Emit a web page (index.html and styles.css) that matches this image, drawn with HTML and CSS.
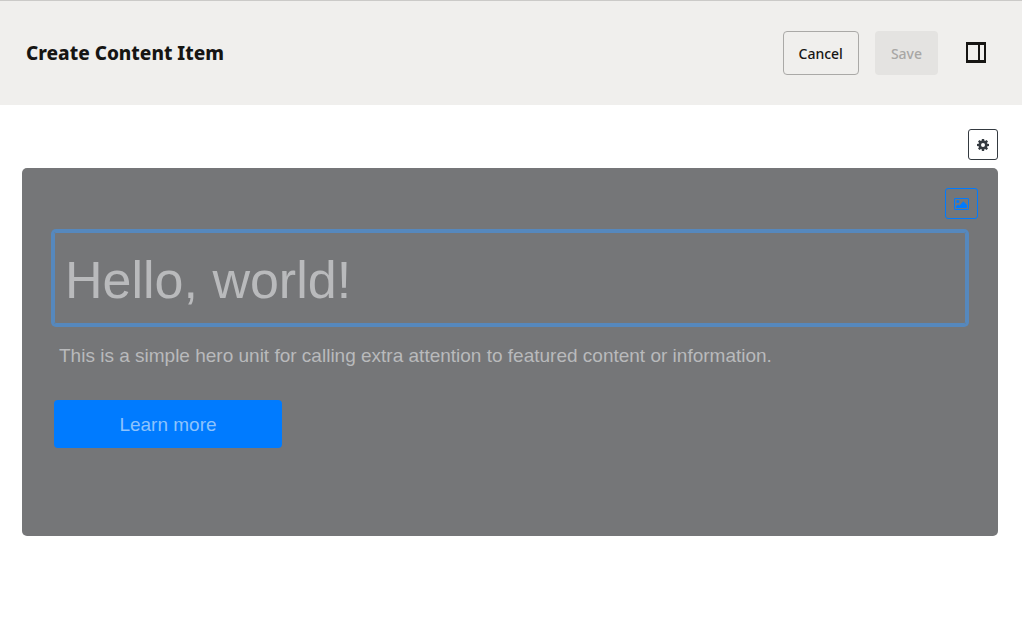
FILE: index.html
```html
<!DOCTYPE html>
<html lang="en">
<head>
<meta charset="utf-8">
<meta name="viewport" content="width=device-width, initial-scale=1">
<title>Create Content Item</title>
<link rel="stylesheet" href="styles.css">
</head>
<body>
<header class="topbar">
  <h1 class="topbar-title">Create Content Item</h1>
  <div class="actions">
    <button type="button" class="btn btn-outline">Cancel</button>
    <button type="button" class="btn btn-save" disabled>Save</button>
    <button type="button" class="btn-panel" aria-label="Toggle side panel">
      <svg width="20" height="21" viewBox="0 0 20 21" aria-hidden="true"><path fill="#161513" fill-rule="evenodd" d="M0 0h20v21H0zM2 3v15h10V3zM14 3v15h4V3z"/></svg>
    </button>
  </div>
</header>
<main class="content">
  <div class="tools">
    <button type="button" class="icon-btn icon-btn-dark" aria-label="Settings">
      <svg width="12" height="12" viewBox="0 0 12 12" aria-hidden="true"><g fill="currentColor"><path id="tooth" d="M4.900 0h2.200l.4 2.500h-3z"/><use href="#tooth" transform="rotate(45 6 6)"/><use href="#tooth" transform="rotate(90 6 6)"/><use href="#tooth" transform="rotate(135 6 6)"/><use href="#tooth" transform="rotate(180 6 6)"/><use href="#tooth" transform="rotate(225 6 6)"/><use href="#tooth" transform="rotate(270 6 6)"/><use href="#tooth" transform="rotate(315 6 6)"/></g><circle cx="6" cy="6" r="3.200" fill="none" stroke="currentColor" stroke-width="2.400"/></svg>
    </button>
  </div>
  <section class="hero" aria-label="Hero">
    <div class="hero-tools">
      <button type="button" class="icon-btn icon-btn-blue" aria-label="Choose image">
        <svg width="15" height="12" viewBox="0 0 15 12" aria-hidden="true"><rect x=".5" y=".5" width="14" height="11" rx=".6" fill="none" stroke="currentColor"/><circle cx="3.800" cy="3.500" r="1.500" fill="currentColor"/><path fill="currentColor" d="M2 10V8.300L4 6.500l1.500 1.200L9.300 3.300 13 7v3z"/></svg>
      </button>
    </div>
    <input class="field field-title" type="text" aria-label="Title" placeholder="Hello, world!">
    <input class="field field-text" type="text" aria-label="Description" placeholder="This is a simple hero unit for calling extra attention to featured content or information.">
    <button type="button" class="cta">Learn more</button>
  </section>
</main>
</body>
</html>
```
FILE: styles.css
```css
* {
  box-sizing: border-box;
}

body {
  margin: 0;
  background: #fff;
  font-family: "Liberation Sans", Arial, sans-serif;
}

button,
input {
  font-family: inherit;
  margin: 0;
}

.topbar {
  display: flex;
  align-items: center;
  justify-content: space-between;
  min-height: 105px;
  padding: 0 24px 0 26px;
  background: #f0efed;
  border-top: 1px solid #cbcac8;
}

.topbar-title {
  margin: 0;
  font: 800 19px/28px "Noto Sans", sans-serif;
  color: #161513;
}

.actions {
  display: flex;
  align-items: center;
  gap: 16px;
}

.btn {
  height: 44px;
  padding: 2px 15px 0;
  border: 1px solid transparent;
  border-radius: 4px;
  font: 500 14px/20px "Noto Sans", sans-serif;
}

.btn-outline {
  border-color: #aaa9a7;
  background: transparent;
  color: #161513;
}

.btn-save {
  background: #e4e3e1;
  color: #a8a7a5;
}

.btn-panel {
  display: flex;
  align-items: center;
  justify-content: center;
  width: 44px;
  height: 44px;
  padding: 0 0 2px;
  border: 0;
  background: transparent;
}

.content {
  padding: 24px 24px 24px 22px;
}

.tools,
.hero-tools {
  display: flex;
  justify-content: flex-end;
}

.tools {
  margin-bottom: 8px;
}

.icon-btn {
  display: flex;
  align-items: center;
  justify-content: center;
  height: 31px;
  padding: 0;
  border: 1px solid currentColor;
  border-radius: 3px;
  background: transparent;
}

.icon-btn-dark {
  width: 30px;
  color: #343a40;
}

.icon-btn-blue {
  width: 33px;
  color: #007bff;
}

.hero {
  padding: 20px 32px 88px;
  border-radius: 5px;
  background: #757678;
}

.hero-tools {
  margin-right: -12px;
  margin-bottom: 13px;
}

.field {
  display: block;
  width: 100%;
  border: 0;
  outline: 0;
  background: transparent;
  color: #b9babc;
}

.field::placeholder {
  color: #b9babc;
  opacity: 1;
}

.field-title {
  height: 92px;
  padding: 4px 10px 0;
  border: 1px solid #5688bd;
  border-radius: 2px;
  box-shadow: 0 0 0 3px #5688bd;
  font-size: 52px;
}

.field-text {
  height: 44px;
  margin: 9px 0 23px;
  padding: 2px 5px 0;
  font-size: 19px;
}

.cta {
  display: block;
  width: 25%;
  height: 48px;
  padding: 2px 16px 0;
  border: 0;
  border-radius: 4px;
  background: #007bff;
  color: #8dc3fc;
  font-size: 19px;
}
```
